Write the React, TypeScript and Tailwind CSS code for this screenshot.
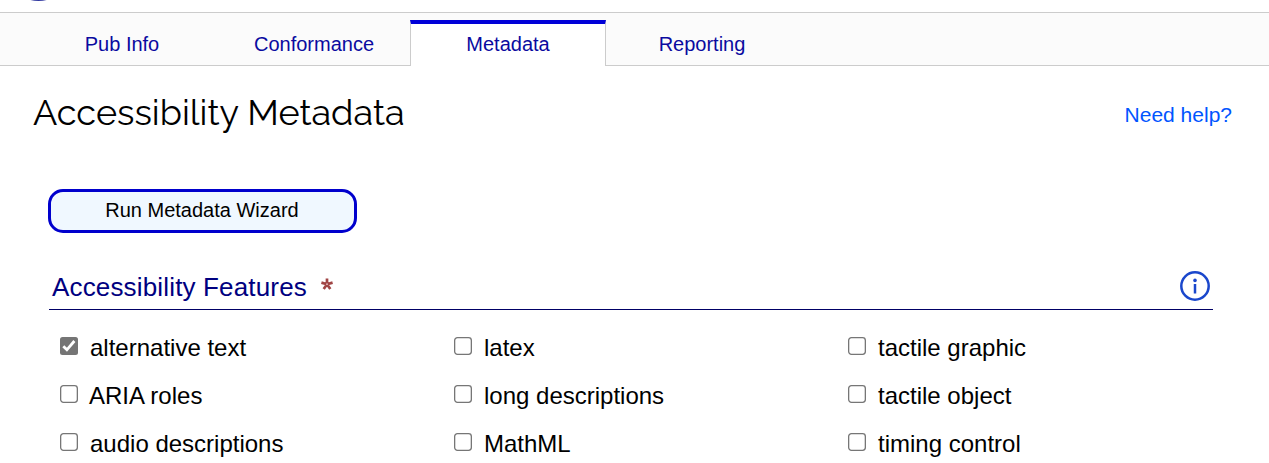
const tabs = [
  { name: "Pub Info", width: "w-[192px]" },
  { name: "Conformance", width: "w-[192px]" },
  { name: "Metadata", width: "w-[196px]", active: true },
  { name: "Reporting", width: "w-[192px]" },
];

const features = [
  ["alternative text", "latex", "tactile graphic"],
  ["ARIA roles", "long descriptions", "tactile object"],
  ["audio descriptions", "MathML", "timing control"],
];

function Checkbox({ checked }: { checked: boolean }) {
  return (
    <svg viewBox="0 0 18 18" className="mt-[13px] h-[18px] w-[18px] shrink-0">
      {checked ? (
        <>
          <rect width="18" height="18" rx="2.5" fill="#757575" />
          <path d="M3.3 9.2l3.6 3.6L14.4 4" fill="none" stroke="white" strokeWidth="2.8" />
        </>
      ) : (
        <rect x="0.65" y="0.65" width="16.7" height="16.7" rx="2.8" fill="white" stroke="#767676" strokeWidth="1.3" />
      )}
    </svg>
  );
}

export default function App() {
  return (
    <div className="h-[463px] w-[1269px] overflow-hidden bg-white font-['Liberation_Sans',Arial,sans-serif] text-black">
      <header className="h-3">
        <svg width="60" height="12" viewBox="0 0 60 12" className="ml-[10px]">
          <ellipse cx="28.5" cy="-9.5" rx="18" ry="10.6" fill="#3038a0" />
        </svg>
      </header>
      <nav className="flex h-[54px] border-t border-[#ccc] bg-[#fbfbfb] text-[20px] leading-[24px] text-[#0a0aa0]">
        <div className="w-[26px] border-b border-[#ccc]" />
        {tabs.map((t) =>
          t.active ? (
            <a key={t.name} className={`${t.width} mt-[7px] border-x border-t-4 border-x-[#ccc] border-t-[#0000d8] bg-white pt-[8px] text-center`}>
              {t.name}
            </a>
          ) : (
            <a key={t.name} className={`${t.width} border-b border-[#ccc] pt-[19px] text-center`}>
              {t.name}
            </a>
          ),
        )}
        <div className="grow border-b border-[#ccc]" />
      </nav>
      <main>
        <div className="flex h-[123px] justify-between pl-[33px] pr-[37px]">
          <h1 className="pt-[24px] font-[Raleway,Lato,sans-serif] text-[36px] leading-[44px] font-normal">Accessibility Metadata</h1>
          <a className="pt-[37px] text-[21px] leading-[24px] text-[#0055ff]">Need help?</a>
        </div>
        <button className="ml-[48px] block h-[44px] w-[309px] rounded-[15px] border-[3px] border-[#0000cd] bg-[#f0f8ff] pr-px pb-[2px] text-[20px] leading-[24px]">
          Run Metadata Wizard
        </button>
        <section className="mr-[56px] ml-[49px]">
          <div className="flex h-[77px] border-b border-[#000066] pl-[3px] text-[26px] leading-[30px] text-[#000080]">
            <h2 className="w-[269px] pt-[39px] tracking-[0.16px]">Accessibility Features</h2>
            <svg viewBox="0 0 12 12" className="mt-[45px] h-3 w-3" fill="none" stroke="#a04545" strokeWidth="2.7">
              <path d="M6 6.2V0.4M6 6.2L0.4 4.6M6 6.2L11.6 4.6M6 6.2L2.7 11M6 6.2L9.3 11" />
              <circle cx="6" cy="6.2" r="0.9" fill="#e3c0c0" stroke="none" />
            </svg>
            <svg viewBox="0 0 30 30" className="mt-[38px] mr-[3px] ml-auto h-[30px] w-[30px]" fill="none" stroke="#1a47cc">
              <circle cx="15" cy="15" r="13.7" strokeWidth="2.5" />
              <path d="M15 13v9.5" strokeWidth="2.5" />
              <circle cx="15" cy="9.4" r="1.8" fill="#1a47cc" stroke="none" />
            </svg>
          </div>
          <div className="grid grid-cols-[394px_394px_376px] pt-[14px] pl-[11px]">
            {features.flat().map((f, i) => (
              <label key={f} className="flex h-[48px] gap-[12px] text-[24px] leading-[48px]">
                <Checkbox checked={i === 0} />
                <span className={f === "ARIA roles" ? "-ml-px" : ""}>{f}</span>
              </label>
            ))}
          </div>
        </section>
      </main>
    </div>
  );
}
